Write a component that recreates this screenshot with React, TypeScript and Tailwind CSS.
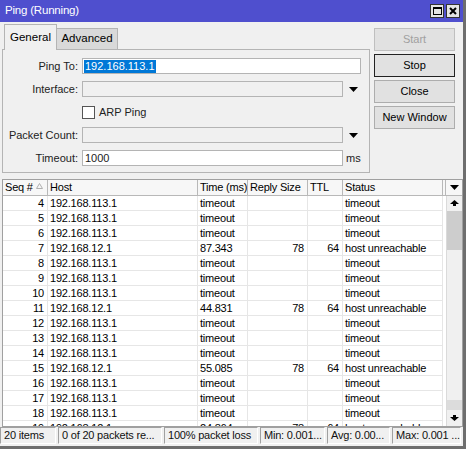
import React from 'react';

type Row = [number, string, string, string, string, string];

const rows: Row[] = [
  [4, '192.168.113.1', 'timeout', '', '', 'timeout'],
  [5, '192.168.113.1', 'timeout', '', '', 'timeout'],
  [6, '192.168.113.1', 'timeout', '', '', 'timeout'],
  [7, '192.168.12.1', '87.343', '78', '64', 'host unreachable'],
  [8, '192.168.113.1', 'timeout', '', '', 'timeout'],
  [9, '192.168.113.1', 'timeout', '', '', 'timeout'],
  [10, '192.168.113.1', 'timeout', '', '', 'timeout'],
  [11, '192.168.12.1', '44.831', '78', '64', 'host unreachable'],
  [12, '192.168.113.1', 'timeout', '', '', 'timeout'],
  [13, '192.168.113.1', 'timeout', '', '', 'timeout'],
  [14, '192.168.113.1', 'timeout', '', '', 'timeout'],
  [15, '192.168.12.1', '55.085', '78', '64', 'host unreachable'],
  [16, '192.168.113.1', 'timeout', '', '', 'timeout'],
  [17, '192.168.113.1', 'timeout', '', '', 'timeout'],
  [18, '192.168.113.1', 'timeout', '', '', 'timeout'],
  [19, '192.168.12.1', '24.864', '78', '64', 'host unreachable'],
];

const cols = 'grid grid-cols-[45px_150px_50px_60px_35px_100px]';

function DropArrow() {
  return (
    <svg width="9" height="5" viewBox="0 0 9 5" className="block">
      <polygon points="0,0 9,0 4.5,5" fill="#000" />
    </svg>
  );
}

function ScrollArrow({ up }: { up?: boolean }) {
  return (
    <svg width="9" height="7" viewBox="0 0 9 7" className={up ? 'block' : 'block rotate-180'}>
      <polygon points="4.5,0 9,4 6,4 6,6 3,6 3,4 0,4" fill="#000" />
    </svg>
  );
}

function Field({ label, children }: { label: string; children: React.ReactNode }) {
  return (
    <div className="flex h-[16px] items-center">
      <div className="w-[75px] text-right">{label}</div>
      <div className="ml-[4px] flex items-center">{children}</div>
    </div>
  );
}

export default function App() {
  const btn = 'h-[23px] w-[81px] border bg-[#e1e1e1] flex items-center justify-center';
  const cell = 'border-r border-[#e6e6e6] pl-[2px] overflow-hidden whitespace-nowrap leading-[14px]';
  const num = 'border-r border-[#e6e6e6] pr-[3px] text-right overflow-hidden whitespace-nowrap leading-[14px]';
  const head = 'border-r border-[#b8b8b8] pl-[2px] overflow-hidden whitespace-nowrap leading-[15px]';
  const status =
    'h-[17px] border border-t-[#a0a0a0] border-l-[#a0a0a0] border-b-white border-r-white pl-[3px] leading-[15px] overflow-hidden whitespace-nowrap';

  return (
    <div
      className="w-[466px] h-[449px] bg-[#f0f0f0] text-[11px] text-black border-r-[3px] border-b-[3px] border-[#6e6e6e] overflow-hidden"
      style={{ fontFamily: '"Liberation Sans", Arial, sans-serif' }}
    >
      {/* title bar */}
      <div className="h-[22px] bg-[#4f4fce] flex items-center pl-[5px] pr-[3px] text-white text-[11.5px] tracking-[-0.2px]">
        <span className="flex-1">Ping (Running)</span>
        <div className="flex gap-[2px]">
          <div className="w-[14px] h-[14px] bg-[#e4e4e4] border border-[#333] flex items-center justify-center">
            <div className="w-[9px] h-[8px] border border-black border-t-2" />
          </div>
          <div className="w-[14px] h-[14px] bg-[#e4e4e4] border border-[#333] flex items-center justify-center">
            <svg width="8" height="8" viewBox="0 0 8 8">
              <path d="M1 1 L7 7 M7 1 L1 7" stroke="#000" strokeWidth="2" />
            </svg>
          </div>
        </div>
      </div>

      {/* top section */}
      <div className="flex">
        <div className="ml-[2px] w-[368px]">
          <div className="h-[27px] flex items-end pl-[2px] text-[11.5px]">
            <div className="h-[26px] w-[53px] border border-b-0 border-[#b4b4b4] bg-[#f0f0f0] flex items-center justify-center relative top-[1px]">
              General
            </div>
            <div className="h-[21px] w-[61px] border border-l-0 border-b-0 border-[#b4b4b4] bg-[#d9d9d9] flex items-center justify-center">
              Advanced
            </div>
          </div>
          <div className="h-[124px] border border-[#b4b4b4] pt-[8px] flex flex-col gap-[7px] text-[#222]">
            <Field label="Ping To:">
              <div className="w-[279px] h-[16px] bg-white border border-[#b4b4b4] flex items-center pl-[1px]">
                <span className="bg-[#0078d7] text-white leading-[13px] px-[1px]">192.168.113.1</span>
              </div>
            </Field>
            <Field label="Interface:">
              <div className="w-[261px] h-[16px] bg-[#f0f0f0] border border-[#b4b4b4]" />
              <div className="ml-[6px]"><DropArrow /></div>
            </Field>
            <div className="flex h-[16px] items-center">
              <div className="ml-[79px] w-[13px] h-[13px] bg-white border border-[#555]" />
              <span className="ml-[4px]">ARP Ping</span>
            </div>
            <Field label="Packet Count:">
              <div className="w-[261px] h-[16px] bg-[#f0f0f0] border border-[#b4b4b4]" />
              <div className="ml-[6px]"><DropArrow /></div>
            </Field>
            <Field label="Timeout:">
              <div className="w-[261px] h-[16px] bg-white border border-[#b4b4b4] pl-[2px] leading-[14px]">1000</div>
              <span className="ml-[3px]">ms</span>
            </Field>
          </div>
        </div>
        <div className="ml-[4px] pt-[6px] flex flex-col gap-[3px]">
          <div className={`${btn} border-[#bfbfbf] text-[#a0a0a0]`}>Start</div>
          <div className={`${btn} border-[#222]`}>Stop</div>
          <div className={`${btn} border-[#adadad]`}>Close</div>
          <div className={`${btn} border-[#adadad]`}>New Window</div>
        </div>
      </div>

      {/* table */}
      <div className="mt-[6px] ml-[2px] w-[461px] border border-[#a0a0a0] bg-white tracking-[-0.2px]">
        <div className="flex h-[16px] border-b border-[#b8b8b8] bg-[#f7f7f7]">
          <div className={`${cols} w-[440px]`}>
            <div className={`${head} flex items-center`}>
              <span>Seq #</span>
              <svg width="7" height="6" viewBox="0 0 7 6" className="ml-[3px] mt-[-3px]">
                <polygon points="3.5,0.5 6.5,5.5 0.5,5.5" fill="none" stroke="#b0b0b0" />
              </svg>
            </div>
            <div className={head}>Host</div>
            <div className={head}>Time (ms)</div>
            <div className={head}>Reply Size</div>
            <div className={head}>TTL</div>
            <div className={head}>Status</div>
          </div>
          <div className="ml-[2px] w-[17px] border-l border-[#b8b8b8] flex items-center justify-center">
            <DropArrow />
          </div>
        </div>
        <div className="flex h-[230px] overflow-hidden">
          <div className="w-[440px]">
            {rows.map((r) => (
              <div key={r[0]} className={`${cols} h-[15px] border-b border-[#e6e6e6]`}>
                <div className={num}>{r[0]}</div>
                <div className={cell}>{r[1]}</div>
                <div className={cell}>{r[2]}</div>
                <div className={num}>{r[3]}</div>
                <div className={`${num} pr-[2px]`}>{r[4]}</div>
                <div className={cell}>{r[5]}</div>
              </div>
            ))}
          </div>
          <div className="ml-[3px] w-[16px] border-l border-[#dadada] flex flex-col bg-[#f0f0f0]">
            <div className="h-[15px] flex items-center justify-center"><ScrollArrow up /></div>
            <div className="h-[39px] bg-[#cdcdcd]" />
            <div className="flex-1" />
            <div className="h-[10px] bg-[#dcdcdc]" />
            <div className="h-[15px] flex items-center justify-center"><ScrollArrow /></div>
            <div className="h-[1px]" />
          </div>
        </div>
      </div>

      {/* status bar */}
      <div className="flex text-[#111] tracking-[-0.2px]">
        <div className={`${status} w-[56px]`}>20 items</div>
        <div className={`${status} ml-[2px] w-[104px]`}>0 of 20 packets re...</div>
        <div className={`${status} ml-[2px] w-[94px]`}>100% packet loss</div>
        <div className={`${status} ml-[2px] w-[65px]`}>Min: 0.001...</div>
        <div className={`${status} ml-[2px] w-[63px]`}>Avg: 0.00...</div>
        <div className={`${status} ml-[2px] w-[69px]`}>Max: 0.001 ...</div>
      </div>
    </div>
  );
}
